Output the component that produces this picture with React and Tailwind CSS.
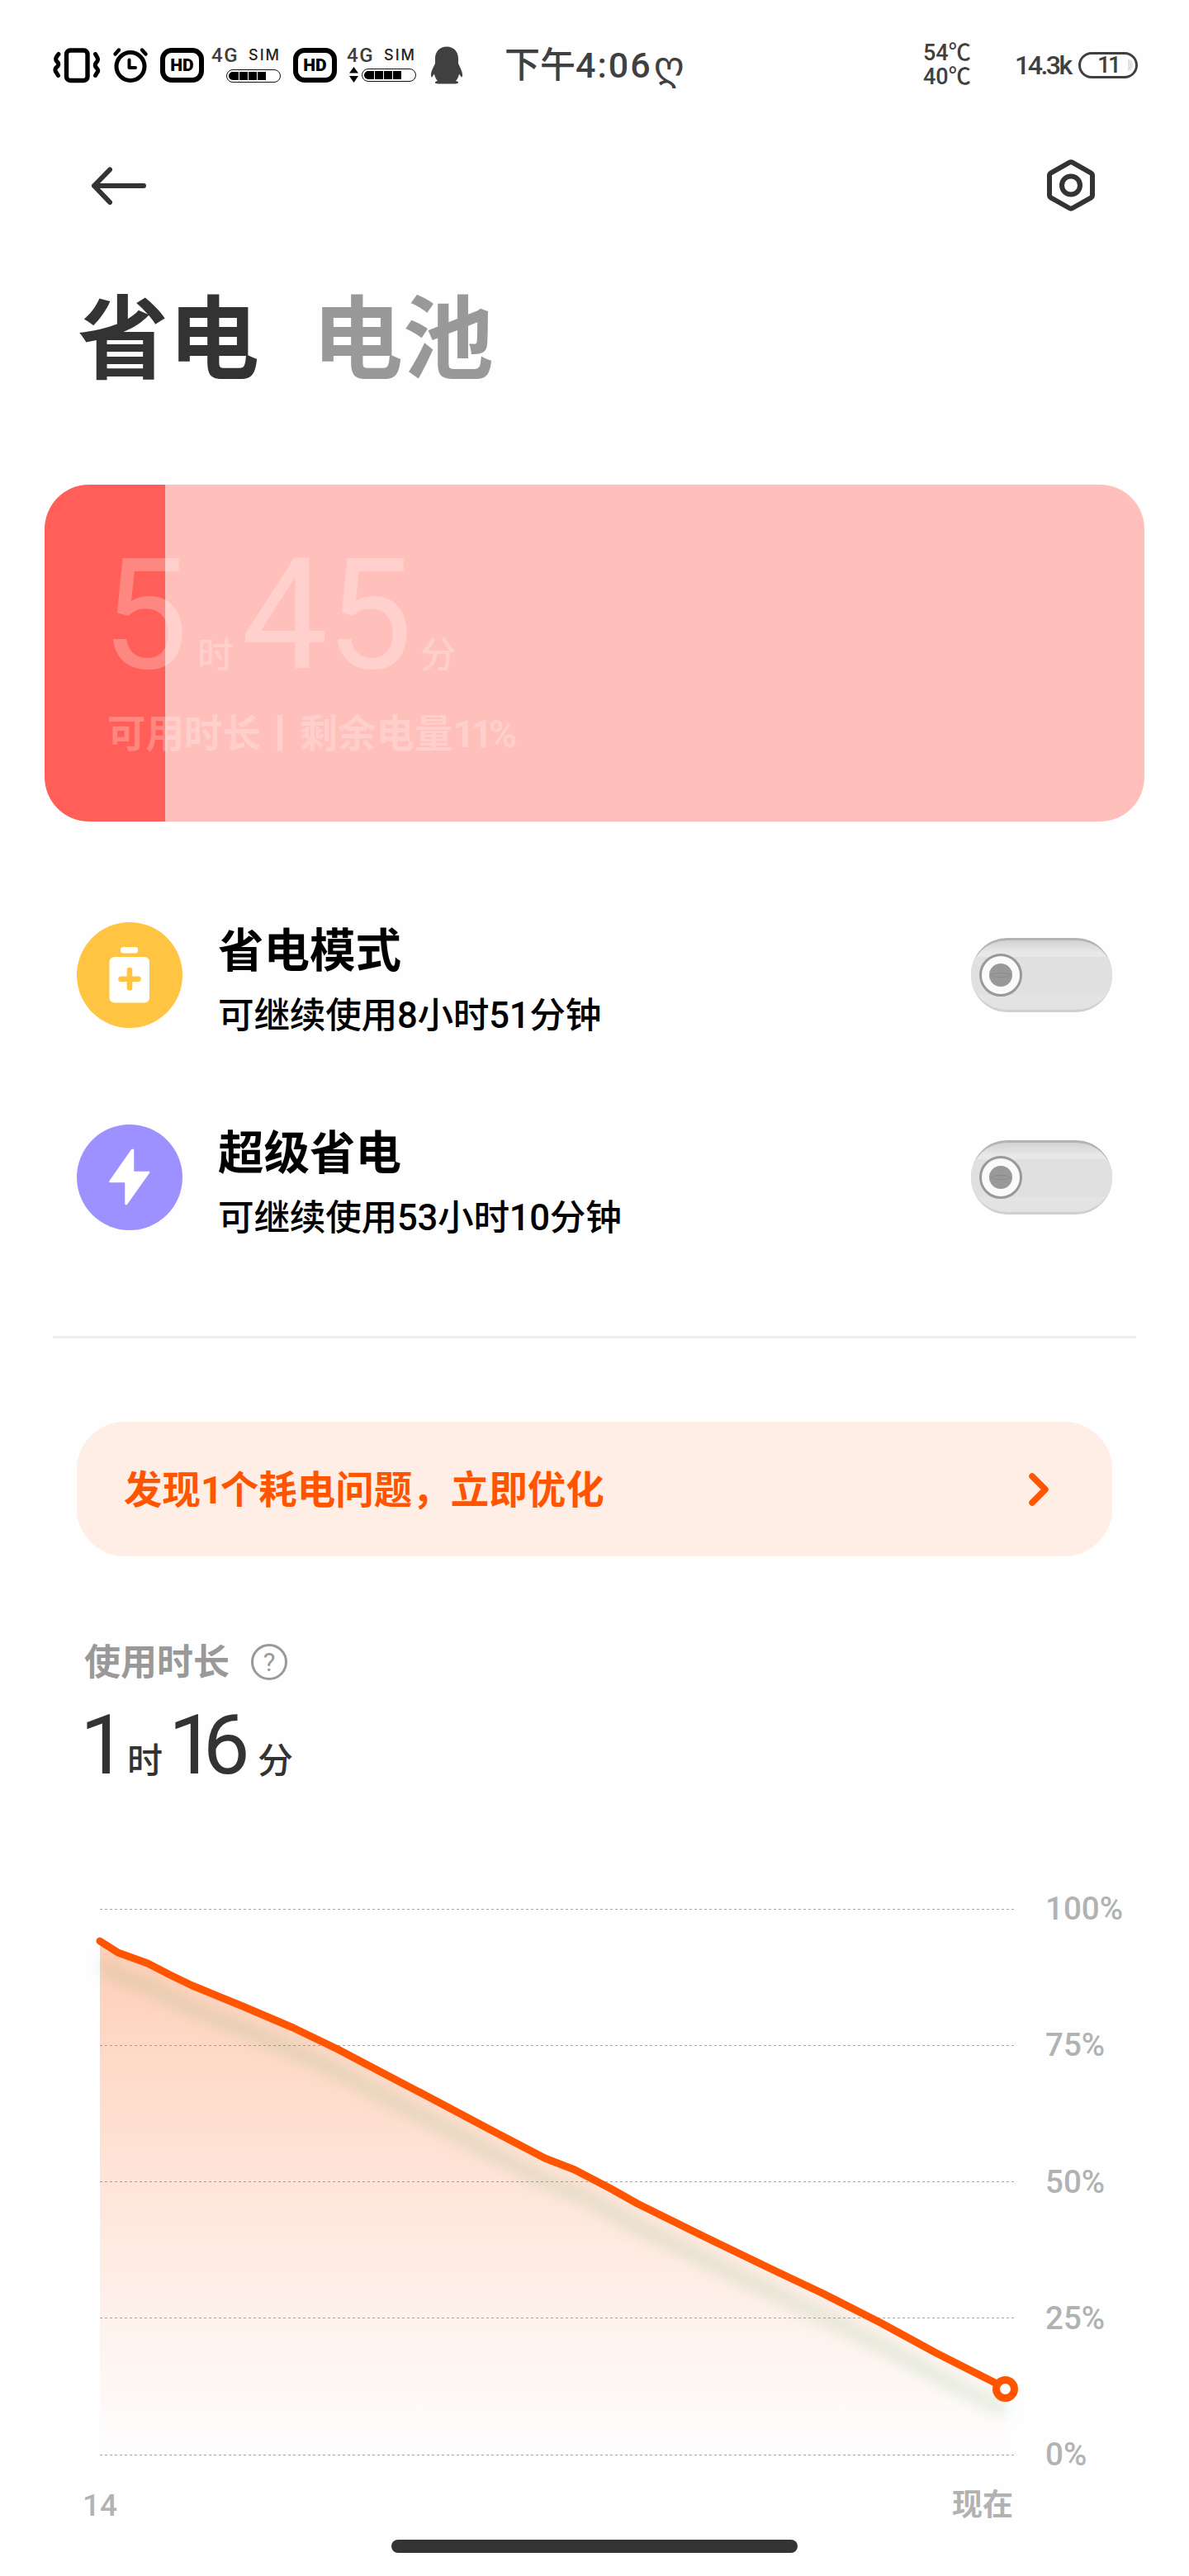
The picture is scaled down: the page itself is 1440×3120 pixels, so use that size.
const SANS = "font-['Roboto','Noto_Sans_CJK_SC','DejaVu_Sans',sans-serif]";

function VibrateIcon() {
  return (
    <svg className="h-11 w-[60px] shrink-0" viewBox="0 0 60 44" fill="none" stroke="#000" strokeLinecap="round" strokeLinejoin="round">
      <rect x="17.5" y="4" width="25.5" height="36.5" rx="4.5" strokeWidth="5.4" />
      <path d="M8 8.5 Q3 14 5.5 17 Q9 20 7 23 Q2 27 5 30.5 L7.5 34.5" strokeWidth="5" />
      <path d="M52.5 8.5 L54.5 12 Q57 16 53 19.5 Q51 23 54.5 26 Q57 29 54.5 31 L52.5 34.5" strokeWidth="5" />
    </svg>
  );
}

function AlarmIcon() {
  return (
    <svg className="h-11 w-[44px] shrink-0" viewBox="0 0 44 44" fill="none" stroke="#000" strokeLinecap="round" strokeLinejoin="round">
      <circle cx="22" cy="23.5" r="17" strokeWidth="5" />
      <path d="M20.5 15.5 V25 H28" strokeWidth="4" />
      <path d="M3.5 8.5 L8 3.5 M40.5 8.5 L36 3.5" strokeWidth="4.4" />
    </svg>
  );
}

function HdBadge() {
  return (
    <div className="flex h-[42px] w-[53px] shrink-0 items-center justify-center rounded-[14px] border-[6px] border-black">
      <span className="font-['Roboto',sans-serif] text-[21px] leading-none font-black text-black">HD</span>
    </div>
  );
}

function Signal({ arrows }) {
  return (
    <div className="flex h-[44px] w-[84px] shrink-0 flex-col justify-between">
      <div className="flex h-[20px] items-center justify-between">
        <span className="font-['Roboto',sans-serif] text-[24px] leading-none font-medium tracking-[1.5px] text-[#3f3f3f]">4G</span>
        <span className="font-['Inter',sans-serif] text-[18px] leading-none font-medium tracking-[2px] text-[#222]">SIM</span>
      </div>
      <div className="flex items-center justify-end gap-1 pb-[1px]">
        {arrows && (
          <svg className="h-[19px] w-[11px]" viewBox="0 0 11 19">
            <path d="M5.5 0 L11 7.5 H0 Z M5.5 19 L0 11 H11 Z" fill="#000" />
          </svg>
        )}
        <div className="flex h-[16px] w-[66px] gap-px rounded-full border-[1.5px] border-[#111] p-[2px]">
          <i className="w-[12px] rounded-l-full bg-black" />
          <i className="w-[10px] bg-black" />
          <i className="w-[10px] bg-black" />
          <i className="w-[10px] bg-black" />
        </div>
      </div>
    </div>
  );
}

function Penguin() {
  return (
    <svg className="h-[46px] w-[40px] shrink-0" viewBox="0 0 40 46" fill="#404040">
      <path d="M20 .5 C29 .5 34 7 34 15 V21 C36.500 26 39 31 39 34.500 C39 37 38.300 38 37.500 37 L35 33.500 C34.500 37 33 40 31 42 C33.500 42.500 34.500 43.300 34 44.500 C33.500 45.500 29 45.500 20 45.500 C11 45.500 6.500 45.500 6 44.500 C5.500 43.300 6.500 42.500 9 42 C7 40 5.500 37 5 33.500 L2.500 37 C1.700 38 1 37 1 34.500 C1 31 3.500 26 6 21 V15 C6 7 11 .5 20 .5 Z" />
    </svg>
  );
}

function StatusBar() {
  return (
    <header className="flex h-[158px] items-center pl-[63px] text-[#404040]">
      <VibrateIcon />
      <div className="ml-[13px] flex"><AlarmIcon /></div>
      <div className="ml-[14px] flex"><HdBadge /></div>
      <div className="ml-[9px] flex"><Signal /></div>
      <div className="ml-[15px] flex"><HdBadge /></div>
      <div className="ml-[12px] flex"><Signal arrows /></div>
      <div className="ml-[17px] flex"><Penguin /></div>
      <div className="ml-[50px] flex w-[250px] items-center text-[43px] leading-none font-medium whitespace-nowrap">
        下午<span className="tracking-[2px]">4:06</span>
        <span className="ml-[2px] font-['DejaVu_Sans',sans-serif] text-[47px] leading-none font-normal">ღ</span>
      </div>
      <div className="ml-[257px] w-[70px] text-[27px] leading-[29px] font-medium">
        <div>54℃</div>
        <div>40℃</div>
      </div>
      <div className="ml-[41px] w-[70px] text-[32px] leading-none font-medium tracking-[-2.5px]">14.3k</div>
      <div className="relative ml-[7px] flex h-[32px] w-[72px] items-center justify-center rounded-full border-[3px] border-[#404040]">
        <i className="absolute top-[6px] right-[3px] h-[14px] w-[6px] rounded-r-full bg-[#e2e2e2]" />
        <span className="text-[28px] leading-none font-medium tracking-[-3px]">11</span>
      </div>
    </header>
  );
}

function NavBar() {
  return (
    <nav className="flex h-[134px] items-center justify-between pr-[112px] pl-[106px]">
      <svg className="h-[50px] w-[74px]" viewBox="0 0 74 50" fill="none" stroke="#333" strokeWidth="6" strokeLinecap="round" strokeLinejoin="round">
        <path d="M68 25 H8 M27 5.500 L8 25 L27 45" />
      </svg>
      <svg className="h-[66px] w-[62px]" viewBox="0 0 62 66" fill="none" stroke="#333" strokeWidth="6" strokeLinejoin="round">
        <path d="M29 4.800 Q31 3.700 33 4.800 L55 17.300 Q57 18.500 57 20.500 V44 Q57 46.500 55 47.700 L33 60 Q31 61.200 29 60 L7 47.700 Q5 46.500 5 44 V20.500 Q5 18.500 7 17.300 Z" />
        <circle cx="31" cy="32.500" r="11" />
      </svg>
    </nav>
  );
}

function BatteryCard() {
  return (
    <section className="mx-[54px] h-[408px] overflow-hidden rounded-[54px] bg-[linear-gradient(to_right,#ff5f58_146px,#ffc0bb_146px)] pt-[67px] pl-[69px] text-white/25">
      <div className="flex h-[184px] items-baseline leading-none">
        <span className="w-[116px] text-[187px] leading-[184px]">5</span>
        <span className="w-[53px] text-[44px] font-medium">时</span>
        <span className="w-[217px] text-[187px] leading-[184px] tracking-[-2px]">45</span>
        <span className="text-[44px] font-medium">分</span>
      </div>
      <div className="mt-[28px] ml-[7px] text-[46.500px] leading-none font-bold whitespace-nowrap">
        可用时长丨剩余电量<span className="tracking-[-5px]">11%</span>
      </div>
    </section>
  );
}

function Toggle() {
  return (
    <div className="relative h-[90px] w-[171px] overflow-hidden rounded-[44px] bg-linear-to-b from-[#cfcfcf] via-[#e8e8e8] via-20% to-[#e2e2e2]">
      <div className="absolute inset-0 rounded-[44px] border-t-[3px] border-b-[3px] border-t-[#b3b3b3] border-b-[#d0d0d0]" />
      <div className="absolute inset-x-0 top-[23px] h-[46px] bg-[#e0e0e0]" />
      <div className="absolute top-[19px] left-[10px] flex size-[52px] items-center justify-center rounded-full border-[3.500px] border-[#999] bg-[#fafafa]">
        <div className="flex size-[28px] items-center justify-center rounded-full bg-[#999]">
          <i className="h-[6px] w-[24px] rounded-[50%] border border-[#8a8a8a]" />
        </div>
      </div>
    </div>
  );
}

function ModeRow({ color, icon, title, detail }) {
  return (
    <div className="flex h-[128px] items-center pr-[93px] pl-[93px]">
      <div className={`flex size-[128px] items-center justify-center rounded-full ${color}`}>{icon}</div>
      <div className="ml-[43px] flex-1 pt-[10px] text-black">
        <div className="text-[55.500px] leading-[64px] font-bold">{title}</div>
        <div className="mt-[23px] text-[43.700px] leading-[44px] font-medium tracking-[-0.3px]">{detail}</div>
      </div>
      <Toggle />
    </div>
  );
}

function BatteryPlusIcon() {
  return (
    <svg className="size-[128px]" viewBox="0 0 128 128">
      <rect x="53" y="30" width="21" height="7.500" rx="3" fill="#fff" />
      <rect x="39.500" y="42" width="48.500" height="55.500" rx="6" fill="#fff" />
      <path d="M53.500 68.800 H74.500 M64 58 V79.500" stroke="#ffc542" strokeWidth="6.600" strokeLinecap="round" />
    </svg>
  );
}

function BoltIcon() {
  return (
    <svg className="size-[128px]" viewBox="0 0 128 128">
      <path d="M67 31 L68 31 V58 H87 L60 96 H59.500 V69 H40.500 Z" fill="#fff" stroke="#fff" strokeWidth="2.500" strokeLinejoin="round" />
    </svg>
  );
}

const SERIES = [
  [121, 2351], [143, 2365], [179, 2378], [206, 2392], [233, 2405], [294, 2430], [355, 2456], [409, 2482],
  [485, 2522], [512, 2536], [593, 2579], [660, 2614], [696, 2628], [740, 2651], [772, 2669], [855, 2710],
  [940, 2751], [995, 2777], [1066, 2813], [1134, 2850], [1217, 2892],
];
const LINE = "M" + SERIES.map((p) => p.join(" ")).join(" L");
const GRID = [2312.5, 2477.5, 2642.5, 2807.5, 2973.5];

function Chart() {
  return (
    <div className="mt-[116px] flex h-[720px]">
      <svg className="h-[720px] w-[1266px] shrink-0" viewBox="0 2280 1266 720" fill="none">
        <defs>
          <linearGradient id="area" gradientUnits="userSpaceOnUse" x1="0" y1="2351" x2="0" y2="2973">
            <stop offset="0" stopColor="#ff5500" stopOpacity="0.28" />
            <stop offset="1" stopColor="#ff5500" stopOpacity="0" />
          </linearGradient>
          <filter id="soft" filterUnits="userSpaceOnUse" x="60" y="2300" width="1206" height="700" colorInterpolationFilters="sRGB">
            <feGaussianBlur stdDeviation="9" />
          </filter>
        </defs>
        {GRID.map((y) => (
          <path key={y} d={`M121 ${y} H1228`} stroke="#a6a6a6" strokeDasharray="3 3" />
        ))}
        <path d={`${LINE} L1217 2973 L121 2973 Z`} fill="url(#area)" />
        <path d={LINE} transform="translate(1 28)" stroke="#3fa04a" strokeOpacity="0.18" strokeWidth="13" filter="url(#soft)" />
        <path d={LINE} stroke="#ff5500" strokeWidth="9" strokeLinecap="round" strokeLinejoin="round" />
        <circle cx="1217.500" cy="2893.500" r="11" fill="#fff" stroke="#ff5500" strokeWidth="9" />
      </svg>
      <div className="mt-[13px] flex h-[699px] flex-col justify-between text-[38.500px] leading-[38px] font-medium text-[#b2b2b2]">
        <span>100%</span>
        <span>75%</span>
        <span>50%</span>
        <span>25%</span>
        <span>0%</span>
      </div>
    </div>
  );
}

export default function App() {
  return (
    <main className={`flex h-[3120px] w-[1440px] flex-col overflow-hidden bg-[#fefefe] ${SANS}`}>
      <StatusBar />
      <NavBar />
      <div className="flex h-[295px] gap-[64px] pt-[66px] pl-[94px] text-[110px] leading-none font-bold">
        <h1 className="text-[#333]">省电</h1>
        <h2 className="text-[#999]">电池</h2>
      </div>
      <BatteryCard />
      <section className="mt-[122px] flex flex-col gap-[117px]">
        <ModeRow color="bg-[#ffc542]" icon={<BatteryPlusIcon />} title="省电模式" detail="可继续使用8小时51分钟" />
        <ModeRow color="bg-[#9d91ff]" icon={<BoltIcon />} title="超级省电" detail="可继续使用53小时10分钟" />
      </section>
      <hr className="mx-[64px] mt-[128px] h-[3px] shrink-0 border-0 bg-[#eeeeee]" />
      <button className="mx-[93px] mt-[101px] flex h-[163px] shrink-0 items-center justify-between rounded-[58px] bg-[#ffeee5] pr-[71px] pl-[57px] text-[46.500px] leading-none font-bold text-[#ff5500]">
        <span className="pt-[3px]">发现<span className="tracking-[-3px]">1</span>个耗电问题，立即优化</span>
        <svg className="h-[44px] w-[32px]" viewBox="0 0 32 44" fill="none" stroke="#ff5500" strokeWidth="7.500" strokeLinecap="round" strokeLinejoin="round">
          <path d="M6 6 L22 22 L6 38" />
        </svg>
      </button>
      <section>
        <div className="mt-[106px] flex h-[44px] items-center pl-[102px] text-[44px] leading-none font-bold text-[#999]">
          <span className="pt-[2px]">使用时长</span>
          <span className="ml-[26px] flex size-[44px] items-center justify-center rounded-full border-[3px] border-[#999] text-[31px] leading-none font-normal">?</span>
        </div>
        <div className="mt-[29px] flex h-[100px] items-baseline pl-[97px] text-[#333]">
          <span className="w-[57px] text-[101px] leading-[100px]">1</span>
          <span className="w-[50px] text-[43px] leading-none font-medium">时</span>
          <span className="w-[108px] text-[101px] leading-[100px] tracking-[-15px]">16</span>
          <span className="text-[43px] leading-none font-medium">分</span>
        </div>
      </section>
      <Chart />
      <div className="mt-[16px] flex h-[38px] justify-between pr-[213px] pl-[100px] text-[37px] leading-[38px] font-medium text-[#b2b2b2]">
        <span>14</span>
        <span className="font-bold">现在</span>
      </div>
      <div className="mx-auto mt-[22px] h-4 w-[492px] shrink-0 rounded-full bg-[#333]" />
    </main>
  );
}
